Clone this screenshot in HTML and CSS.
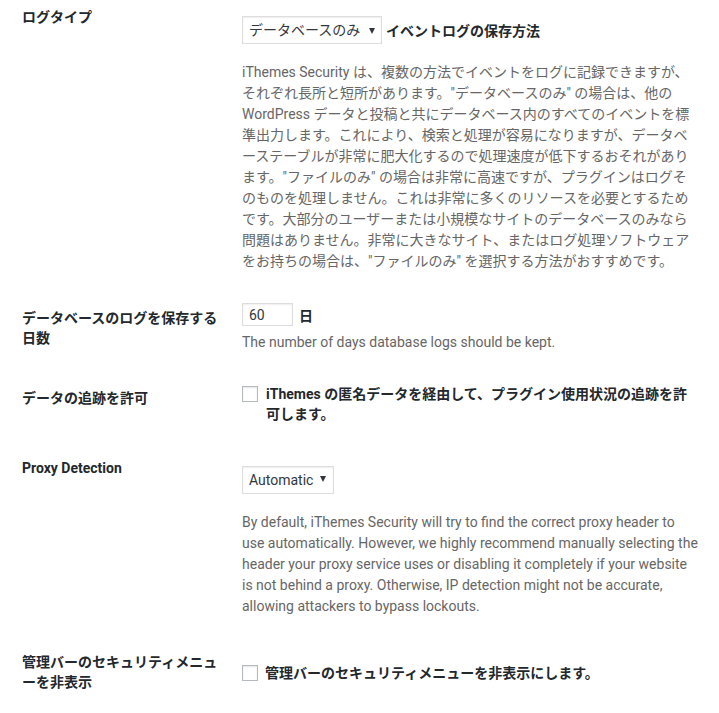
FILE: index.html
```html
<!DOCTYPE html>
<html lang="ja">
<head>
<meta charset="utf-8">
<link rel="stylesheet" href="styles.css">
</head>
<body>
<div class="form">
  <div class="row row-logtype">
    <div class="th">ログタイプ</div>
    <div class="td">
      <div class="inline">
        <span class="select sel-db"><select><option>データベースのみ</option></select></span>
        <span class="strong">イベントログの保存方法</span>
      </div>
      <p class="desc desc-first">iThemes Security は、複数の方法でイベントをログに記録できますが、<br>それぞれ長所と短所があります。"データベースのみ" の場合は、他の<br>WordPress データと投稿と共にデータベース内のすべてのイベントを標<br>準出力します。これにより、検索と処理が容易になりますが、データベ<br>ーステーブルが非常に肥大化するので処理速度が低下するおそれがあり<br>ます。"ファイルのみ" の場合は非常に高速ですが、プラグインはログそ<br>のものを処理しません。これは非常に多くのリソースを必要とするため<br>です。大部分のユーザーまたは小規模なサイトのデータベースのみなら<br>問題はありません。非常に大きなサイト、またはログ処理ソフトウェア<br>をお持ちの場合は、"ファイルのみ" を選択する方法がおすすめです。</p>
    </div>
  </div>

  <div class="row row-days">
    <div class="th th-days">データベースのログを保存する<br>日数</div>
    <div class="td">
      <div class="inline">
        <input class="text" type="text" value="60">
        <span class="unit">日</span>
      </div>
      <p class="desc desc-days">The number of days database logs should be kept.</p>
    </div>
  </div>

  <div class="row row-track">
    <div class="th th-track">データの追跡を許可</div>
    <div class="td">
      <label class="check">
        <span class="box"></span>
        <span class="check-text strong">iThemes の匿名データを経由して、プラグイン使用状況の追跡を許<br>可します。</span>
      </label>
    </div>
  </div>

  <div class="row row-proxy">
    <div class="th th-proxy">Proxy Detection</div>
    <div class="td td-proxy">
      <span class="select sel-auto"><select><option>Automatic</option></select></span>
      <p class="desc desc-proxy">By default, iThemes Security will try to find the correct proxy header to<br>use automatically. However, we highly recommend manually selecting the<br>header your proxy service uses or disabling it completely if your website<br>is not behind a proxy. Otherwise, IP detection might not be accurate,<br>allowing attackers to bypass lockouts.</p>
    </div>
  </div>

  <div class="row row-admin">
    <div class="th th-admin">管理バーのセキュリティメニュ<br>ーを非表示</div>
    <div class="td td-admin">
      <label class="check">
        <span class="box box-admin"></span>
        <span class="check-text strong">管理バーのセキュリティメニューを非表示にします。</span>
      </label>
    </div>
  </div>
</div>
</body>
</html>
```

FILE: styles.css
```css
html, body {
  margin: 0;
  padding: 0;
  background: #ffffff;
}

body {
  font-family: Roboto, "Noto Sans CJK JP", sans-serif;
  font-size: 14px;
  color: #444444;
  width: 719px;
  height: 713px;
  overflow: hidden;
}

.form {
  padding-left: 22px;
}

.row {
  display: flex;
  align-items: flex-start;
}

.th {
  width: 220px;
  flex: none;
  font-weight: bold;
  color: #23282d;
  line-height: 20px;
}

.td {
  flex: 1;
  min-width: 0;
}

.strong {
  font-weight: bold;
  color: #23282d;
}

/* row 1 */
.row-logtype .th {
  padding-top: 7px;
}
.row-logtype .td {
  padding-top: 16px;
}

.inline {
  display: flex;
  align-items: center;
}

.select {
  position: relative;
  display: inline-block;
  flex: none;
}

.select select {
  -webkit-appearance: none;
  appearance: none;
  box-sizing: border-box;
  margin: 0;
  height: 28px;
  font-family: inherit;
  font-size: 14px;
  color: #32373c;
  background: #ffffff;
  border: 1px solid #dddddd;
  box-shadow: inset 0 1px 2px rgba(0, 0, 0, 0.07);
  border-radius: 0;
  padding: 0 4px 0 6px;
  line-height: 26px;
  outline: none;
}

.select::after {
  content: "";
  position: absolute;
  right: 7px;
  top: 11px;
  width: 0;
  height: 0;
  border-left: 3px solid transparent;
  border-right: 3px solid transparent;
  border-top: 6px solid #32373c;
  pointer-events: none;
}

.sel-db select {
  width: 140px;
}
.sel-db::after {
  top: 12px;
}

.sel-db + .strong {
  margin-left: 4px;
}

.desc {
  margin: 0;
  color: #666666;
  line-height: 21px;
  white-space: nowrap;
}

.desc-first {
  margin-top: 18px;
}

/* row 2 */
.row-days {
  margin-top: 31px;
}
.th-days {
  padding-top: 5px;
}

.text {
  box-sizing: border-box;
  width: 51px;
  height: 23px;
  margin: 0;
  padding: 0 6px;
  font-family: inherit;
  font-size: 14px;
  color: #32373c;
  border: 1px solid #dddddd;
  box-shadow: inset 0 1px 2px rgba(0, 0, 0, 0.07);
  border-radius: 0;
  outline: none;
}

.unit {
  margin-left: 6px;
  font-weight: bold;
  color: #23282d;
}

.desc-days {
  margin-top: 6px;
}

/* row 3 */
.row-track {
  margin-top: 31px;
}
.th-track {
  padding-top: 4px;
}

.check {
  display: flex;
  align-items: flex-start;
  line-height: 20px;
}

.box {
  box-sizing: border-box;
  flex: none;
  width: 16px;
  height: 16px;
  margin-top: 2px;
  margin-right: 8px;
  border: 1px solid #b4b9be;
  background: #ffffff;
  box-shadow: inset 0 1px 2px rgba(0, 0, 0, 0.1);
}

/* row 4 */
.row-proxy {
  margin-top: 34px;
}
.td-proxy {
  padding-top: 8px;
}
.sel-auto select {
  width: 92px;
}
.sel-auto::after {
  top: 10px;
  right: 8px;
}

.desc-proxy {
  margin-top: 18px;
}

/* row 5 */
.row-admin {
  margin-top: 35px;
}
.td-admin {
  padding-top: 11px;
}
.box-admin {
  margin-right: 7px;
}
```
